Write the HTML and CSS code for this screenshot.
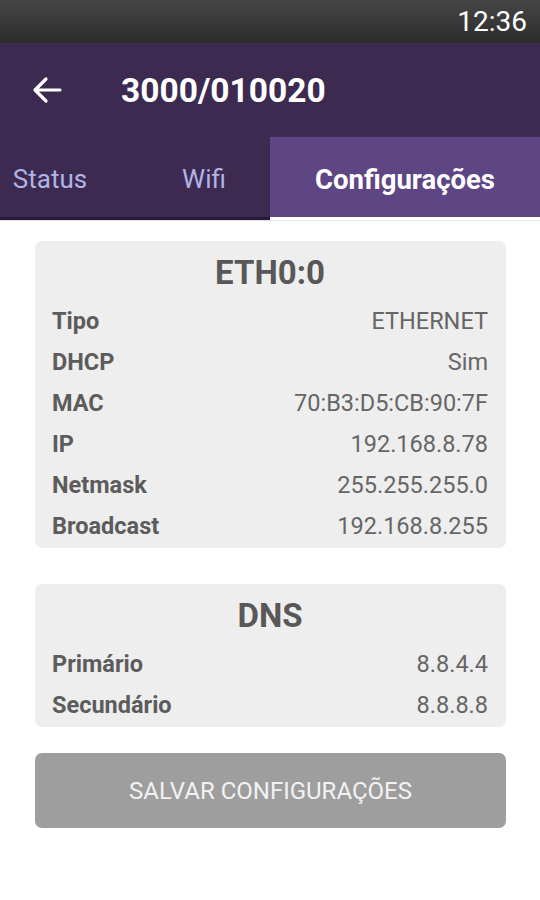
FILE: index.html
```html
<!DOCTYPE html>
<html lang="pt">
<head>
<meta charset="utf-8">
<title>3000/010020</title>
<link rel="stylesheet" href="styles.css">
</head>
<body>
<div class="screen">
  <div class="statusbar"><span class="time">12:36</span></div>
  <header class="appbar">
    <svg class="back" width="30" height="28" viewBox="0 0 30 28" aria-hidden="true">
      <path d="M28 14H4M14 3L3 14l11 11" fill="none" stroke="#fff" stroke-width="3.2" stroke-linecap="round" stroke-linejoin="round"/>
    </svg>
    <h1 class="title">3000/010020</h1>
  </header>
  <nav class="tabs">
    <div class="tab tab-status">Status</div>
    <div class="tab tab-wifi">Wifi</div>
    <div class="tab tab-config active">Configurações</div>
  </nav>
  <main class="content">
    <section class="card">
      <h2 class="card-title">ETH0:0</h2>
      <div class="row"><span class="label">Tipo</span><span class="value">ETHERNET</span></div>
      <div class="row"><span class="label">DHCP</span><span class="value">Sim</span></div>
      <div class="row"><span class="label">MAC</span><span class="value">70:B3:D5:CB:90:7F</span></div>
      <div class="row"><span class="label">IP</span><span class="value">192.168.8.78</span></div>
      <div class="row"><span class="label">Netmask</span><span class="value">255.255.255.0</span></div>
      <div class="row"><span class="label">Broadcast</span><span class="value">192.168.8.255</span></div>
    </section>
    <section class="card">
      <h2 class="card-title">DNS</h2>
      <div class="row"><span class="label">Primário</span><span class="value">8.8.4.4</span></div>
      <div class="row"><span class="label">Secundário</span><span class="value">8.8.8.8</span></div>
    </section>
    <button class="save">SALVAR CONFIGURAÇÕES</button>
  </main>
</div>
</body>
</html>
```
FILE: styles.css
```css
html, body {
  margin: 0;
  padding: 0;
  background: #ffffff;
}
body {
  font-family: Roboto, "Liberation Sans", sans-serif;
}
.screen {
  width: 540px;
  height: 900px;
  display: flex;
  flex-direction: column;
}
.statusbar {
  height: 43px;
  background: linear-gradient(#464646, #2c2c2c);
  display: flex;
  align-items: center;
  justify-content: flex-end;
  padding-right: 13px;
}
.time {
  color: #ffffff;
  font-size: 28px;
  line-height: 43px;
}
.appbar {
  height: 94px;
  background: #3c2a51;
  display: flex;
  align-items: center;
}
.back {
  margin-left: 32px;
  margin-right: 59px;
  flex: none;
}
.title {
  margin: 0;
  color: #ffffff;
  font-size: 33.5px;
  font-weight: 700;
  letter-spacing: 0;
}
.tabs {
  height: 83px;
  background: #3c2a51;
  display: flex;
}
.tab {
  box-sizing: border-box;
  height: 83px;
  display: flex;
  align-items: center;
  justify-content: center;
  padding-top: 4px;
  font-size: 26px;
  color: #b0b4e6;
  border-bottom: 3px solid #2a1740;
}
.tab-status {
  width: 100px;
}
.tab-wifi {
  width: 170px;
  padding-left: 38px;
}
.tab-config {
  width: 270px;
}
.tab.active {
  background: #5e4684;
  color: #ffffff;
  font-size: 27.5px;
  font-weight: 700;
  border-bottom: 3px solid #ffffff;
}
.content {
  display: flex;
  flex-direction: column;
  padding: 20px 34px 0 35px;
  border-top: 1px solid #e4e4e4;
}
.card {
  background: #eeeeee;
  border-radius: 7px;
  padding: 12px 18px 2px 17px;
  margin-bottom: 36px;
}
.card + .card {
  margin-bottom: 26px;
}
.card-title {
  margin: 0 0 7px;
  text-align: center;
  font-size: 33px;
  line-height: 40px;
  font-weight: 700;
  color: #585858;
}
.row {
  display: flex;
  justify-content: space-between;
  align-items: center;
  height: 41px;
  font-size: 23.5px;
}
.label {
  font-weight: 700;
  color: #5c5c5c;
}
.value {
  color: #666666;
}
.save {
  height: 75px;
  border: none;
  border-radius: 7px;
  background: #9e9e9e;
  color: #f2f2f2;
  font-family: Roboto, "Liberation Sans", sans-serif;
  font-size: 24px;
  padding: 0;
}
```
